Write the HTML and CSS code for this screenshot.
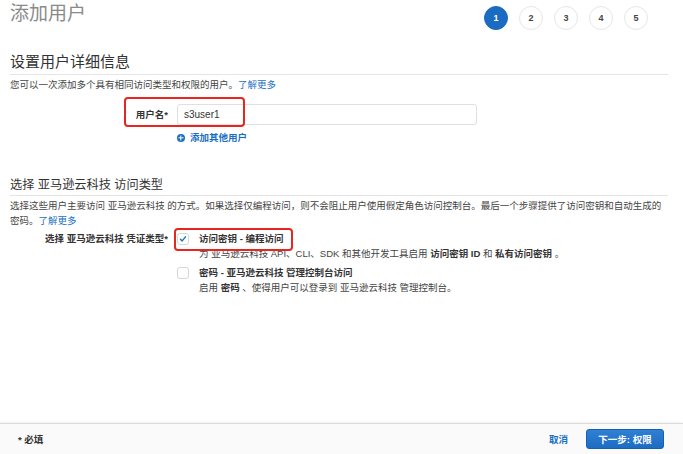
FILE: index.html
```html
<!DOCTYPE html>
<html lang="zh-CN">
<head>
<meta charset="utf-8">
<title>添加用户</title>
<link rel="stylesheet" href="styles.css">
</head>
<body>
<div class="page">
  <div class="top">
    <h1 class="title">添加用户</h1>
    <ol class="steps">
      <li class="active">1</li>
      <li>2</li>
      <li>3</li>
      <li>4</li>
      <li>5</li>
    </ol>
  </div>

  <div class="panel">
    <h2 class="head">设置用户详细信息</h2>
    <p class="desc">您可以一次添加多个具有相同访问类型和权限的用户。<a href="#">了解更多</a></p>
    <div class="row row-user">
      <label class="lbl">用户名*</label>
      <div class="ctl">
        <input class="txt" type="text" value="s3user1">
        <a class="add" href="#"><span class="plus"></span>添加其他用户</a>
      </div>
      <span class="mark mark-user"></span>
    </div>
  </div>

  <div class="panel panel2">
    <h2 class="head head-sm">选择 亚马逊云科技 访问类型</h2>
    <p class="desc">选择这些用户主要访问 亚马逊云科技 的方式。如果选择仅编程访问，则不会阻止用户使用假定角色访问控制台。最后一个步骤提供了访问密钥和自动生成的密码。<a href="#">了解更多</a></p>
    <div class="row row-type">
      <label class="lbl">选择 亚马逊云科技 凭证类型*</label>
      <div class="ctl">
        <div class="opt">
          <span class="box checked">
            <svg viewBox="0 0 12 12" width="12" height="12"><path d="M3 6.2 L5 8.3 L9 3.4" fill="none" stroke="#1a6dc6" stroke-width="1.7" stroke-linecap="round" stroke-linejoin="round"/></svg>
          </span>
          <div class="opt-text">
            <div class="opt-title">访问密钥 - 编程访问</div>
            <div class="opt-desc">为 亚马逊云科技 API、CLI、SDK 和其他开发工具启用 <b>访问密钥 ID</b> 和 <b>私有访问密钥</b> 。</div>
          </div>
          <span class="mark mark-type"></span>
        </div>
        <div class="opt">
          <span class="box"></span>
          <div class="opt-text">
            <div class="opt-title">密码 - 亚马逊云科技 管理控制台访问</div>
            <div class="opt-desc">启用 <b>密码</b> 、使得用户可以登录到 亚马逊云科技 管理控制台。</div>
          </div>
        </div>
      </div>
    </div>
  </div>

  <div class="foot">
    <span class="req">* 必填</span>
    <div class="actions">
      <a class="cancel" href="#">取消</a>
      <button class="next" type="button">下一步: 权限</button>
    </div>
  </div>
</div>
</body>
</html>
```

FILE: styles.css
```css
*{
	margin:0;
	padding:0;
	box-sizing:border-box;
	}
html,body{
	height:100%;
	}
body{
	font-family:"Liberation Sans","Noto Sans CJK SC",sans-serif;
	color:#444;
	background:#fff;
	}
a{
	color:#1a6fc4;
	text-decoration:none;
	}
li{
	list-style:none;
	}
.page{
	min-height:100vh;
	display:flex;
	flex-direction:column;
	}
.top{
	display:flex;
	justify-content:space-between;
	align-items:flex-start;
	padding:0 35px 0 10px;
	}
.title{
	font-size:19px;
	line-height:28px;
	font-weight:normal;
	color:#8a8a8a;
	}
.steps{
	display:flex;
	gap:11px;
	margin-top:6px;
	}
.steps li{
	width:24px;
	height:24px;
	border-radius:50%;
	border:1px solid #e6e6e6;
	font-size:9px;
	font-weight:bold;
	color:#444;
	display:flex;
	align-items:center;
	justify-content:center;
	}
.steps li.active{
	background:#1b6bc2;
	border-color:#1b6bc2;
	color:#fff;
	}
.panel{
	padding:0 15px 0 10px;
	}
.head{
	margin-top:22px;
	font-size:15px;
	line-height:20px;
	font-weight:normal;
	color:#333;
	padding-bottom:2px;
	border-bottom:1px solid #e4e4e4;
	}
.head-sm{
	margin-top:0;
	font-size:12.2px;
	line-height:18px;
	padding-bottom:1px;
	}
.panel2{
	margin-top:31px;
	}
.desc{
	margin-top:3px;
	font-size:9.5px;
	line-height:14px;
	color:#444;
	}
.panel2 .desc{
	margin-top:2px;
	line-height:15px;
	}
.row{
	position:relative;
	display:grid;
	grid-template-columns:158px 1fr;
	column-gap:9px;
	}
.row-user{
	margin-top:12px;
	}
.row-type{
	margin-top:3px;
	}
.lbl{
	text-align:right;
	font-size:9.5px;
	font-weight:bold;
	color:#333;
	line-height:21px;
	}
.row-type .lbl{
	line-height:15px;
	}
.txt{
	display:block;
	width:300px;
	height:21px;
	border:1px solid #e0e0e0;
	border-radius:3px;
	padding:0 6px;
	font-family:"Liberation Sans","Noto Sans CJK SC",sans-serif;
	font-size:10px;
	color:#333;
	outline:none;
	}
.add{
	display:flex;
	align-items:center;
	gap:5px;
	margin-top:6px;
	font-size:9.5px;
	line-height:14px;
	font-weight:bold;
	}
.plus{
	position:relative;
	width:8px;
	height:8px;
	border-radius:50%;
	background:#1a6fc4;
	}
.plus:before,.plus:after{
	content:"";
	position:absolute;
	background:#fff;
	left:50%;
	top:50%;
	transform:translate(-50%,-50%);
	}
.plus:before{
	width:5px;
	height:1.4px;
	}
.plus:after{
	width:1.4px;
	height:5px;
	}
.opt{
	position:relative;
	display:flex;
	gap:10px;
	}
.opt + .opt{
	margin-top:4px;
	}
.box{
	flex:none;
	width:12px;
	height:12px;
	margin-top:2px;
	border:1px solid #d6d6d6;
	border-radius:3px;
	background:#fff;
	display:flex;
	align-items:center;
	justify-content:center;
	}
.box svg{
	display:block;
	}
.opt-title{
	font-size:9.5px;
	line-height:15px;
	font-weight:bold;
	color:#333;
	}
.opt-desc{
	margin-top:1px;
	font-size:9.5px;
	line-height:14px;
	color:#444;
	}
.opt-desc b{
	color:#333;
	}
.mark{
	position:absolute;
	border:2px solid #e8251f;
	border-radius:4px;
	pointer-events:none;
	}
.mark-user{
	left:114px;
	top:-7px;
	width:121px;
	height:30px;
	}
.mark-type{
	left:-3px;
	top:-3px;
	width:119px;
	height:23px;
	}
.foot{
	margin-top:auto;
	height:31px;
	display:flex;
	align-items:center;
	justify-content:space-between;
	padding:0 19px 0 18px;
	background:#fafafa;
	border-top:1px solid #dcdcdc;
	box-shadow:0 -1px 2px rgba(0,0,0,0.06);
	}
.req{
	font-size:9.5px;
	font-weight:bold;
	color:#333;
	}
.actions{
	display:flex;
	align-items:center;
	gap:18px;
	}
.cancel{
	font-size:9.5px;
	font-weight:bold;
	}
.next{
	width:78px;
	height:20px;
	border:1px solid #1660b3;
	border-radius:3px;
	background:linear-gradient(#2f80d3,#1c6cc3);
	color:#fff;
	font-family:"Liberation Sans","Noto Sans CJK SC",sans-serif;
	font-size:9.5px;
	font-weight:bold;
	}
```
